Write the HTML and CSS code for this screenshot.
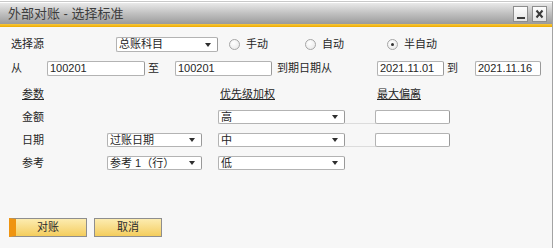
FILE: index.html
```html
<html>
  <head>
    <title>外部对账 - 选择标准</title>
    <link rel="stylesheet" href="styles.css">
  </head>
  <body>
    <div class="window">
      <div class="titlebar">
        <span class="title">外部对账 - 选择标准</span>
        <span class="tb-buttons">
          <span class="tb-btn">
            <svg width="13" height="14" viewBox="0 0 13 14"><rect x="3" y="10" width="8" height="2" fill="#3a3a3a"/></svg>
          </span>
          <span class="tb-btn">
            <svg width="13" height="14" viewBox="0 0 13 14"><path d="M3.5 3.5 L9.5 10.5 M9.5 3.5 L3.5 10.5" stroke="#3a3a3a" stroke-width="2"/></svg>
          </span>
        </span>
      </div>
      <div class="stripe"></div>

      <div class="content">
        <div class="row">
          <span class="lbl w-src">选择源</span>
          <div class="box select w-src-sel">总账科目<i class="arrow"></i></div>
          <label class="radio r-manual"><span class="circle"></span>手动</label>
          <label class="radio r-auto"><span class="circle"></span>自动</label>
          <label class="radio"><span class="circle checked"></span>半自动</label>
        </div>

        <div class="row row-range">
          <span class="lbl w-from">从</span>
          <div class="box w-acct">100201</div>
          <span class="lbl w-to">至</span>
          <div class="box w-acct2">100201</div>
          <span class="lbl w-due">到期日期从</span>
          <div class="box w-date">2021.11.01</div>
          <span class="lbl w-to2">到</span>
          <div class="box w-date2">2021.11.16</div>
        </div>

        <div class="grid-row head">
          <span class="c-name"><u>参数</u></span>
          <span class="c-field"></span>
          <span class="c-prio"><u>优先级加权</u></span>
          <span class="c-gap"></span>
          <span class="c-dev"><u>最大偏离</u></span>
        </div>

        <div class="grid-row">
          <span class="c-name">金额</span>
          <span class="c-field"></span>
          <div class="box select c-prio">高<i class="arrow"></i></div>
          <span class="c-gap link"></span>
          <div class="box c-dev"></div>
        </div>

        <div class="grid-row">
          <span class="c-name">日期</span>
          <div class="box select c-field">过账日期<i class="arrow"></i></div>
          <div class="box select c-prio">中<i class="arrow"></i></div>
          <span class="c-gap link"></span>
          <div class="box c-dev"></div>
        </div>

        <div class="grid-row">
          <span class="c-name">参考</span>
          <div class="box select c-field">参考 1（行）<i class="arrow"></i></div>
          <div class="box select c-prio">低<i class="arrow"></i></div>
        </div>

        <div class="actions">
          <button class="btn btn-main">对账</button>
          <button class="btn btn-cancel">取消</button>
        </div>
      </div>
    </div>
  </body>
</html>
```

FILE: styles.css
```css
:root {
  --text: #262626;
  --box-border: #b3b3b3;
  --panel: #f7f7f7;
}

body {
  margin: 0;
  padding-top: 1px;
  background-color: #fff;
  color: var(--text);
  font-family: "Liberation Sans", "Noto Sans CJK SC", sans-serif;
  font-size: 11px;
  line-height: 13px;
}

.window {
  width: 553px;
  height: 247px;
  box-sizing: border-box;
  border-top: 1px solid #c9c9c9;
  border-right: 1px solid #a3a3a3;
  background-color: var(--panel);
  display: flex;
  flex-direction: column;
}

.titlebar {
  height: 21px;
  border-top: 1px solid #fff;
  padding-left: 8px;
  display: flex;
  align-items: center;
  background: linear-gradient(#e9e9e9, #c4c4c4 45%, #a2a2a2 90%, #9a9a9a);
}
.title {
  font-size: 13px;
  line-height: 16px;
  color: #3d3d3d;
  padding-top: 1px;
}
.tb-buttons {
  margin-left: auto;
  padding-right: 5px;
  display: flex;
  gap: 4px;
}
.tb-btn {
  width: 15px;
  height: 16px;
  box-sizing: border-box;
  border: 1px solid #8d8d8d;
  background: linear-gradient(#fdfdfd, #e4e4e4);
  display: flex;
  align-items: center;
  justify-content: center;
}
.stripe {
  height: 3px;
  background: linear-gradient(#f7c83c, #eeaa00);
}

.content {
  flex-grow: 1;
  padding-top: 10px;
  display: flex;
  flex-direction: column;
}

.row {
  height: 15px;
  padding-left: 11px;
  display: flex;
  align-items: center;
}
.row-range {
  margin-top: 9px;
}
.lbl {
  flex-shrink: 0;
  box-sizing: border-box;
}
.w-src { width: 105px; }
.w-from { width: 36px; }
.w-to { width: 30px; padding-left: 3px; }
.w-due { width: 105px; padding-left: 5px; }
.w-to2 { width: 31px; padding-left: 3px; }

.box {
  flex-shrink: 0;
  box-sizing: border-box;
  height: 100%;
  padding: 0 2px;
  background-color: #fff;
  border: 1px solid var(--box-border);
  border-right-color: #999;
  border-radius: 2px;
  display: flex;
  align-items: center;
}
.w-src-sel { width: 102px; }
.w-acct { width: 98px; }
.w-acct2 { width: 97px; }
.w-date { width: 67px; }
.w-date2 { width: 66px; }

.select {
  justify-content: space-between;
}
.arrow {
  width: 0;
  height: 0;
  margin-right: 4px;
  border-left: 3px solid transparent;
  border-right: 3px solid transparent;
  border-top: 4px solid #2e2e2e;
}

.radio {
  flex-shrink: 0;
  display: flex;
  align-items: center;
}
.r-manual { width: 76px; margin-left: 11px; }
.r-auto { width: 82px; }
.circle {
  width: 11px;
  height: 11px;
  margin-right: 6px;
  box-sizing: border-box;
  border: 1px solid #a6a6a6;
  border-radius: 50%;
  background: radial-gradient(circle at 40% 35%, #fff, #e6e6e6);
  display: flex;
  align-items: center;
  justify-content: center;
}
.circle.checked::after {
  content: "";
  width: 3px;
  height: 3px;
  border-radius: 50%;
  background-color: #333;
}

.grid-row {
  height: 14px;
  margin-top: 9px;
  padding-left: 22px;
  display: flex;
  align-items: center;
}
.grid-row.head {
  margin-top: 11px;
}
.c-name { width: 85px; flex-shrink: 0; }
.c-field { width: 95px; margin-right: 16px; }
.c-prio { width: 127px; }
.c-gap { width: 30px; flex-shrink: 0; }
.c-dev { width: 75px; }
.head .c-prio,
.head .c-dev {
  padding-left: 2px;
  box-sizing: border-box;
}
.head .c-dev { width: auto; }
.link {
  align-self: stretch;
  box-sizing: border-box;
  border-bottom: 1px solid #dcdcdc;
}

.actions {
  margin-top: 48px;
  padding-left: 9px;
  display: flex;
  gap: 7px;
}
.btn {
  height: 19px;
  padding: 0;
  border: 1px solid #8e8e8e;
  background: linear-gradient(#fcecb0, #f8db84 55%, #f4cd5c);
  color: #2b2b2b;
  font-family: inherit;
  font-size: 11px;
  line-height: 15px;
}
.btn-main {
  width: 78px;
  border-left: 7px solid #ee9a14;
  border-left-color: #ef9410;
  padding-right: 6px;
}
.btn-cancel {
  width: 68px;
}
```
